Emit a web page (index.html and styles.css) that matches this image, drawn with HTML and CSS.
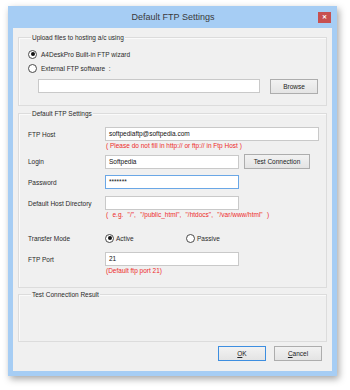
FILE: index.html
```html
<!DOCTYPE html>
<html>
<head>
<meta charset="utf-8">
<link rel="stylesheet" href="styles.css">
</head>
<body>
<div class="window">
  <div class="titlebar">
    <span></span>
    <span class="title">Default FTP Settings</span>
    <span class="close">&#x2715;</span>
  </div>
  <div class="content">
    <div class="group g1">
      <div class="legend">Upload files to hosting a/c using</div>
      <div class="radio-row r1"><span class="radio on"></span><span>A4DeskPro Built-in FTP wizard</span></div>
      <div class="radio-row r2"><span class="radio"></span><span>External FTP software &nbsp;:</span></div>
      <div class="browse-row"><span class="input ext"></span><span class="btn browse">Browse</span></div>
    </div>
    <div class="group g2">
      <div class="legend">Default FTP Settings</div>
      <div class="row host"><span class="label">FTP Host</span><span class="input wide">softpediaftp@softpedia.com</span></div>
      <div class="note">( Please do not fill in http:// or ftp:// in Ftp Host )</div>
      <div class="row login"><span class="label">Login</span><span class="input">Softpedia</span><span class="btn test">Test Connection</span></div>
      <div class="row pass"><span class="label">Password</span><span class="input focus">*******</span></div>
      <div class="row dir"><span class="label">Default Host Directory</span><span class="input"></span></div>
      <div class="note spaced">( e.g. "/", "/public_html", "/htdocs", "/var/www/html" )</div>
      <div class="row mode"><span class="label">Transfer Mode</span>
        <span class="opt active"><span class="radio on"></span>Active</span>
        <span class="opt"><span class="radio"></span>Passive</span>
      </div>
      <div class="row port"><span class="label">FTP Port</span><span class="input">21</span></div>
      <div class="note">(Default ftp port 21)</div>
    </div>
    <div class="group g3">
      <div class="legend">Test Connection Result</div>
    </div>
    <div class="buttons">
      <span class="btn ok"><u>O</u>K</span>
      <span class="btn cancel"><u>C</u>ancel</span>
    </div>
  </div>
</div>
</body>
</html>
```
FILE: styles.css
```css
html, body {
  margin: 0;
  padding: 0;
  background: #ffffff;
}
body {
  font-family: "Liberation Sans", Arial, sans-serif;
  font-size: 6.5px;
  color: #2a2a2a;
  padding: 6px 0 0 8px;
  height: 384px;
}
.window {
  width: 329px;
  height: 370px;
  background: #a6cdf4;
  box-shadow: 2px 3px 7px rgba(0, 0, 0, 0.35);
  box-sizing: border-box;
  padding: 0 5px 5px 5px;
  display: flex;
  flex-direction: column;
}
.titlebar {
  height: 22px;
  display: grid;
  grid-template-columns: 1fr auto 1fr;
}
.title {
  font-size: 9px;
  color: #3a3a3a;
  line-height: 22px;
  margin-left: 1px;
}
.close {
  justify-self: end;
  align-self: start;
  margin-top: 6px;
  margin-right: 1px;
  width: 13px;
  height: 11px;
  background: #c75050;
  color: #fff;
  font-size: 6px;
  line-height: 11px;
  text-align: center;
  font-weight: bold;
}
.content {
  flex: 1;
  background: #f0f0f0;
  padding: 9px 5px 0 5px;
}
.group {
  border: 1px solid #dcdcdc;
  box-shadow: inset 1px 1px 0 #fafafa;
  padding-left: 9px;
}
.legend {
  margin: -5px 0 0 3px;
  padding: 0 1px;
  background: #f0f0f0;
  width: max-content;
  line-height: 9px;
}
.g1 { padding-bottom: 11px; }
.radio-row {
  display: flex;
  align-items: center;
  height: 10px;
  gap: 4px;
}
.r1 { margin-top: 7px; }
.r2 { margin-top: 4px; }
.radio {
  width: 9px;
  height: 9px;
  box-sizing: border-box;
  border: 1px solid #4a4a4a;
  border-radius: 50%;
  background: #fff;
  display: inline-flex;
  align-items: center;
  justify-content: center;
  flex: none;
}
.radio.on::after {
  content: "";
  width: 4px;
  height: 4px;
  border-radius: 50%;
  background: #111;
}
.browse-row {
  display: flex;
  align-items: flex-start;
  margin-top: 6px;
  padding-left: 10px;
  gap: 10px;
}
.input {
  display: block;
  box-sizing: border-box;
  height: 14px;
  width: 134px;
  background: #fff;
  border: 1px solid #c9c9c9;
  line-height: 12px;
  padding-left: 3px;
  color: #111;
}
.input.ext { width: 222px; height: 14px; }
.input.wide { width: 214px; }
.input.focus { border-color: #6aa7e6; }
.btn {
  display: block;
  box-sizing: border-box;
  height: 15px;
  line-height: 13px;
  text-align: center;
  border: 1px solid #adadad;
  background: linear-gradient(#f2f2f2, #e4e4e4);
  color: #222;
}
.browse { width: 48px; }
.g2 { padding-bottom: 12px; margin-top: 7px; }
.row {
  display: flex;
  align-items: center;
}
.label {
  width: 77px;
  flex: none;
}
.host { margin-top: 9px; }
.note {
  color: #ee2a2a;
  line-height: 9px;
  padding-left: 78px;
}
.note.spaced { word-spacing: 2.5px; }
.login { margin-top: 4px; height: 15px; }
.test { width: 66px; margin-left: 5px; }
.pass { margin-top: 6px; }
.dir { margin-top: 7px; }
.mode { margin-top: 14px; height: 10px; }
.opt {
  display: flex;
  align-items: center;
  gap: 2px;
}
.opt.active { width: 81px; }
.port { margin-top: 9px; }
.g3 {
  margin-top: 6px;
  height: 48px;
  box-sizing: border-box;
}
.buttons {
  display: flex;
  justify-content: flex-end;
  gap: 8px;
  margin-top: 4px;
  padding-right: 5px;
}
.ok, .cancel { width: 48px; }
.ok { border-color: #3d8ee0; }
```
